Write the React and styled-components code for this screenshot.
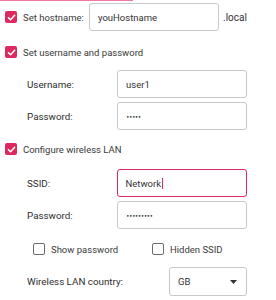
import React from "react";
import styled, { createGlobalStyle } from "styled-components";

const Global = createGlobalStyle`
  html, body { margin: 0; padding: 0; background: #fff; }
  body { font-family: Roboto, "Liberation Sans", sans-serif; color: #333; }
`;

const PINK = "#dc2a60";

const Page = styled.div`
  width: 276px;
  height: 300px;
  overflow: hidden;
  background: #fff;
`;

const TopIndicator = styled.div`
  width: 133px;
  height: 1px;
  background: #ec7c9e;
`;

const Content = styled.div`
  display: flex;
  flex-direction: column;
  padding-left: 5px;
`;

const CheckRow = styled.div`
  display: flex;
  align-items: center;
  margin-top: ${(p) => p.$mt}px;
  height: ${(p) => p.$h || 12}px;
`;

const Box = styled.span`
  box-sizing: border-box;
  width: 12px;
  height: 12px;
  flex: none;
  border-radius: 2px;
  display: flex;
  align-items: center;
  justify-content: center;
  background: ${(p) => (p.$checked ? PINK : "#fff")};
  border: ${(p) => (p.$checked ? "none" : "1px solid #6a6a6a")};
`;

const CheckLabel = styled.span`
  margin-left: 6px;
  font-size: 9.5px;
  color: #3a3a3a;
  white-space: nowrap;
  width: ${(p) => (p.$w ? `${p.$w}px` : "auto")};
`;

const Field = styled.div`
  box-sizing: border-box;
  width: ${(p) => p.$w || 130}px;
  height: ${(p) => p.$h || 28}px;
  border: ${(p) => (p.$focus ? `1.5px solid ${PINK}` : "1px solid #c9c9c9")};
  border-radius: 3px;
  background: #fff;
  display: flex;
  align-items: center;
  padding-left: ${(p) => (p.$focus ? 7.5 : 8)}px;
  font-size: 9.5px;
  color: #333;
`;

const Caret = styled.span`
  display: inline-block;
  width: 1px;
  height: 11px;
  background: ${PINK};
  margin-left: 0.5px;
`;

const Dots = styled.span`
  font-size: 6px;
  letter-spacing: -0.6px;
  color: #333;
  font-family: "DejaVu Sans", sans-serif;
`;

const Suffix = styled.span`
  margin-left: 4px;
  font-size: 10px;
  color: #333;
`;

const FormGrid = styled.div`
  display: grid;
  grid-template-columns: 90px 130px;
  row-gap: 4px;
  margin-left: 22px;
  margin-top: ${(p) => p.$mt}px;
  align-items: center;
`;

const FieldLabel = styled.span`
  font-size: 9.8px;
  color: #2e2e2e;
`;

const OptionRow = styled.div`
  display: flex;
  align-items: center;
  margin-top: 14px;
  margin-left: 28px;
  height: 12px;
`;

const Option = styled.div`
  display: flex;
  align-items: center;
  width: ${(p) => p.$w}px;
`;

const CountryRow = styled.div`
  display: grid;
  grid-template-columns: 142px 78px;
  align-items: center;
  margin-left: 22px;
  margin-top: 12px;
`;

const Select = styled.div`
  box-sizing: border-box;
  width: 78px;
  height: 29px;
  border: 1px solid #c9c9c9;
  border-radius: 3px;
  display: flex;
  align-items: center;
  justify-content: space-between;
  padding: 0 9px 0 8px;
  font-size: 9.5px;
  color: #333;
`;

const Check = () => (
  <svg width="9" height="9" viewBox="0 0 10 10">
    <path d="M1.6 5.2 L4 7.5 L8.5 2.6" fill="none" stroke="#fff" strokeWidth="1.7" strokeLinecap="round" strokeLinejoin="round" />
  </svg>
);

const Arrow = () => (
  <svg width="7" height="4" viewBox="0 0 7 4">
    <path d="M0 0 L7 0 L3.5 4 Z" fill="#333" />
  </svg>
);

export default function App() {
  return (
    <Page>
      <Global />
      <TopIndicator />
      <Content>
        <CheckRow $mt={2} $h={28}>
          <Box $checked><Check /></Box>
          <CheckLabel $w={66}>Set hostname:</CheckLabel>
          <Field>youHostname</Field>
          <Suffix>.local</Suffix>
        </CheckRow>

        <CheckRow $mt={15}>
          <Box $checked><Check /></Box>
          <CheckLabel>Set username and password</CheckLabel>
        </CheckRow>

        <FormGrid $mt={12}>
          <FieldLabel>Username:</FieldLabel>
          <Field>user1</Field>
          <FieldLabel>Password:</FieldLabel>
          <Field><Dots>•••••</Dots></Field>
        </FormGrid>

        <CheckRow $mt={13}>
          <Box $checked><Check /></Box>
          <CheckLabel>Configure wireless LAN</CheckLabel>
        </CheckRow>

        <FormGrid $mt={14}>
          <FieldLabel>SSID:</FieldLabel>
          <Field $focus>Network<Caret /></Field>
          <FieldLabel>Password:</FieldLabel>
          <Field><Dots>•••••••••</Dots></Field>
        </FormGrid>

        <OptionRow>
          <Option $w={119}>
            <Box />
            <CheckLabel>Show password</CheckLabel>
          </Option>
          <Option $w={100}>
            <Box />
            <CheckLabel>Hidden SSID</CheckLabel>
          </Option>
        </OptionRow>

        <CountryRow>
          <FieldLabel>Wireless LAN country:</FieldLabel>
          <Select>
            <span>GB</span>
            <Arrow />
          </Select>
        </CountryRow>
      </Content>
    </Page>
  );
}
